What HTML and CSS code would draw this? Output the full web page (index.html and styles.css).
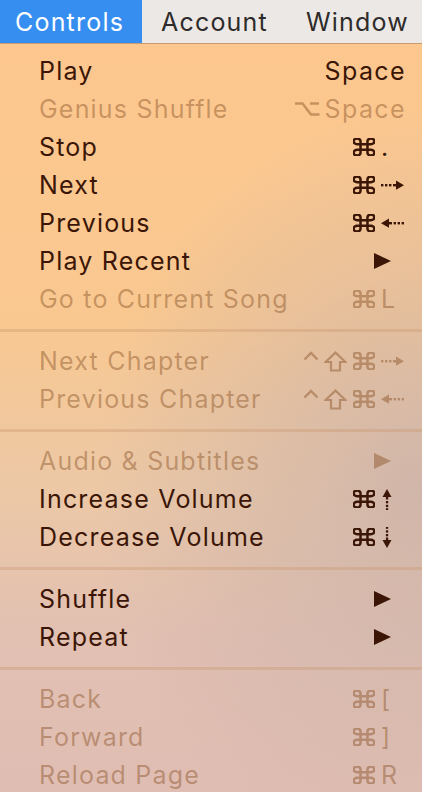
FILE: index.html
```html
<!DOCTYPE html>
<html lang="en">
	<head>
		<meta charset="UTF-8" />
		<meta name="viewport" content="width=device-width, initial-scale=1.0" />
		<title>Controls Menu</title>
		<link rel="stylesheet" href="styles.css">
	</head>
	<body>
		<!-- shortcut glyphs -->
		<svg class="defs" xmlns="http://www.w3.org/2000/svg">
			<symbol id="cmd" viewBox="2.5 2.5 19 19" preserveAspectRatio="none">
				<path d="M15 6v12a3 3 0 1 0 3-3H6a3 3 0 1 0 3 3V6a3 3 0 1 0-3 3h12a3 3 0 1 0-3-3" fill="none" stroke="currentColor" stroke-width="2.5" vector-effect="non-scaling-stroke" />
			</symbol>
			<symbol id="opt" viewBox="0 0 26 16">
				<path d="M1 2.5h7.5l8.5 11h8.5M16 2.5h9" fill="none" stroke="currentColor" stroke-width="2.4" />
			</symbol>
			<symbol id="shift" viewBox="0 0 23 21">
				<path d="M11.5 1.6 21.5 11H16V19.5H7V11H1.5Z" fill="none" stroke="currentColor" stroke-width="2.2" stroke-linejoin="miter" />
			</symbol>
			<symbol id="ctrl" viewBox="0 0 16 10">
				<path d="M1.5 8.5 8 2l6.5 6.5" fill="none" stroke="currentColor" stroke-width="2.4" />
			</symbol>
			<symbol id="right" viewBox="0 0 23 10">
				<rect x="0" y="4" width="2.4" height="2.4" /><rect x="4" y="4" width="2.4" height="2.4" /><rect x="8" y="4" width="2.4" height="2.4" /><rect x="12" y="4" width="3" height="2.4" />
				<path d="M15 0.5 23 5.2 15 9.8Z" />
			</symbol>
			<symbol id="left" viewBox="0 0 23 10">
				<rect x="20.6" y="4" width="2.4" height="2.4" /><rect x="16.6" y="4" width="2.4" height="2.4" /><rect x="12.6" y="4" width="2.4" height="2.4" /><rect x="8" y="4" width="3" height="2.4" />
				<path d="M8 0.5 0 5.2 8 9.8Z" />
			</symbol>
			<symbol id="up" viewBox="0 0 10 21">
				<path d="M0.5 8 5 0 9.5 8Z" />
				<rect x="3.9" y="8" width="2.3" height="2.5" /><rect x="3.9" y="12" width="2.3" height="2.3" /><rect x="3.9" y="15.8" width="2.3" height="2.3" /><rect x="3.9" y="19.2" width="2.3" height="1.8" />
			</symbol>
			<symbol id="down" viewBox="0 0 10 21">
				<rect x="3.9" y="0" width="2.3" height="1.8" /><rect x="3.9" y="3.3" width="2.3" height="2.3" /><rect x="3.9" y="7" width="2.3" height="2.3" /><rect x="3.9" y="10.5" width="2.3" height="2.5" />
				<path d="M0.5 13 5 21 9.5 13Z" />
			</symbol>
		</svg>

		<div class="menubar">
			<span class="title active">Controls</span>
			<span class="title">Account</span>
			<span class="title">Window</span>
		</div>

		<div class="menu">
			<div class="group">
				<div class="item">
					<span class="label">Play</span>
					<span class="keys"><span class="key wide">Space</span></span>
				</div>
				<div class="item off">
					<span class="label">Genius Shuffle</span>
					<span class="keys"><svg class="g-opt"><use href="#opt" /></svg><span class="key wide">Space</span></span>
				</div>
				<div class="item">
					<span class="label">Stop</span>
					<span class="keys"><svg class="g-cmd"><use href="#cmd" /></svg><span class="key">.</span></span>
				</div>
				<div class="item">
					<span class="label">Next</span>
					<span class="keys"><svg class="g-cmd"><use href="#cmd" /></svg><span class="key"><svg class="g-h"><use href="#right" /></svg></span></span>
				</div>
				<div class="item">
					<span class="label">Previous</span>
					<span class="keys"><svg class="g-cmd"><use href="#cmd" /></svg><span class="key"><svg class="g-h"><use href="#left" /></svg></span></span>
				</div>
				<div class="item">
					<span class="label">Play Recent</span>
					<span class="sub"></span>
				</div>
				<div class="item off">
					<span class="label">Go to Current Song</span>
					<span class="keys"><svg class="g-cmd"><use href="#cmd" /></svg><span class="key">L</span></span>
				</div>
			</div>
			<div class="group">
				<div class="item off">
					<span class="label">Next Chapter</span>
					<span class="keys"><svg class="g-ctrl"><use href="#ctrl" /></svg><svg class="g-shift"><use href="#shift" /></svg><svg class="g-cmd"><use href="#cmd" /></svg><span class="key"><svg class="g-h"><use href="#right" /></svg></span></span>
				</div>
				<div class="item off">
					<span class="label">Previous Chapter</span>
					<span class="keys"><svg class="g-ctrl"><use href="#ctrl" /></svg><svg class="g-shift"><use href="#shift" /></svg><svg class="g-cmd"><use href="#cmd" /></svg><span class="key"><svg class="g-h"><use href="#left" /></svg></span></span>
				</div>
			</div>
			<div class="group">
				<div class="item off">
					<span class="label">Audio &amp; Subtitles</span>
					<span class="sub"></span>
				</div>
				<div class="item">
					<span class="label">Increase Volume</span>
					<span class="keys"><svg class="g-cmd"><use href="#cmd" /></svg><span class="key"><svg class="g-v"><use href="#up" /></svg></span></span>
				</div>
				<div class="item">
					<span class="label">Decrease Volume</span>
					<span class="keys"><svg class="g-cmd"><use href="#cmd" /></svg><span class="key"><svg class="g-v"><use href="#down" /></svg></span></span>
				</div>
			</div>
			<div class="group">
				<div class="item">
					<span class="label">Shuffle</span>
					<span class="sub"></span>
				</div>
				<div class="item">
					<span class="label">Repeat</span>
					<span class="sub"></span>
				</div>
			</div>
			<div class="group">
				<div class="item off">
					<span class="label">Back</span>
					<span class="keys"><svg class="g-cmd"><use href="#cmd" /></svg><span class="key">[</span></span>
				</div>
				<div class="item off">
					<span class="label">Forward</span>
					<span class="keys"><svg class="g-cmd"><use href="#cmd" /></svg><span class="key">]</span></span>
				</div>
				<div class="item off">
					<span class="label">Reload Page</span>
					<span class="keys"><svg class="g-cmd"><use href="#cmd" /></svg><span class="key">R</span></span>
				</div>
			</div>
		</div>
	</body>
</html>
```

FILE: styles.css
```css
body {
	margin: 0;
	height: 792px;
	overflow: hidden;
	font-family: Inter, "DejaVu Sans", sans-serif;
	background:
		radial-gradient(ellipse at 100% 62%, rgba(205, 180, 170, 0.9), rgba(205, 180, 170, 0) 55%),
		linear-gradient(180deg, #fdc78f 0%, #f9c890 40%, #ecc8a6 62%, #e2c0b2 80%, #e0bdb2 100%);
}
.defs {
	display: none;
}
.menubar {
	display: flex;
	height: 44px;
	background: #ece8e6;
	border-bottom: 1px solid #c99a6c;
	box-sizing: border-box;
}
.title {
	display: flex;
	align-items: center;
	padding: 0 19px;
	font-size: 25px;
	letter-spacing: 1.2px;
	color: #2e2b2a;
}
.title.active {
	width: 142px;
	box-sizing: border-box;
	padding-left: 15px;
	background: #368ef0;
	color: #fff;
}
.menu {
	padding-top: 8px;
}
.group {
	padding-bottom: 11px;
	margin-bottom: 10px;
	border-bottom: 3px solid rgba(200, 150, 110, 0.35);
}
.group:last-child {
	border-bottom: none;
}
.item {
	display: flex;
	justify-content: space-between;
	align-items: center;
	height: 38px;
	padding: 0 17px 0 39px;
	font-size: 25px;
	letter-spacing: 1.2px;
	color: #3b1606;
}
.item.off {
	color: rgba(135, 80, 35, 0.45);
}
.keys {
	display: flex;
	align-items: center;
}
.keys svg {
	fill: currentColor;
	flex: none;
}
.key {
	display: flex;
	align-items: center;
	width: 24px;
	margin-left: 6px;
	letter-spacing: 0;
}
.key.wide {
	width: auto;
	margin-left: 5px;
	letter-spacing: 1.4px;
	margin-right: -1px;
}
.g-cmd {
	width: 22px;
	height: 18px;
}
.g-opt {
	width: 26px;
	height: 16px;
}
.g-ctrl {
	width: 16px;
	height: 10px;
	margin-bottom: 10px;
}
.g-shift {
	width: 23px;
	height: 21px;
	margin-left: 5px;
	margin-right: 6px;
}
.g-h {
	width: 23px;
	height: 10px;
}
.g-v {
	width: 10px;
	height: 21px;
	margin-left: 1px;
}
.sub {
	width: 0;
	height: 0;
	margin-right: 14px;
	border-top: 8px solid transparent;
	border-bottom: 8px solid transparent;
	border-left: 17px solid currentColor;
}
```
